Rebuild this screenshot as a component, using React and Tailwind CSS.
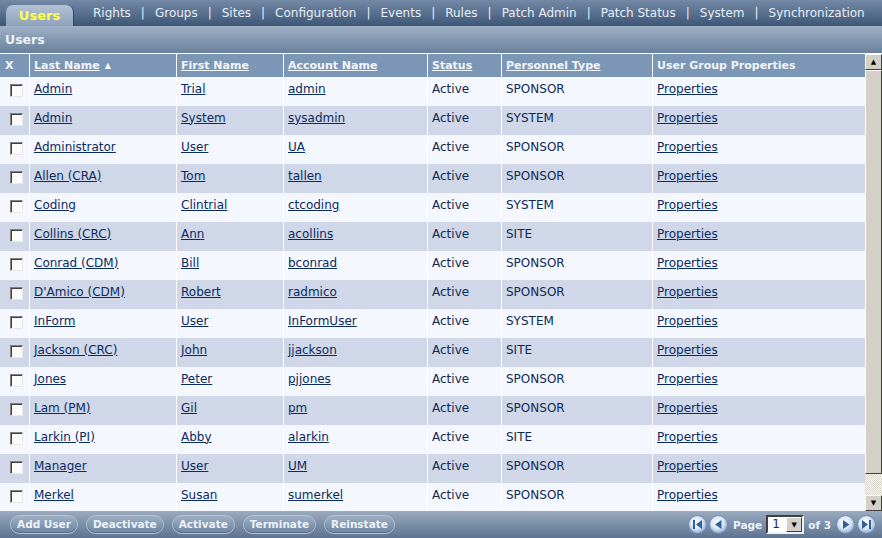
import React from 'react';

const NAV = ['Rights', 'Groups', 'Sites', 'Configuration', 'Events', 'Rules', 'Patch Admin', 'Patch Status', 'System', 'Synchronization'];

const USERS = [
  ['Admin', 'Trial', 'admin', 'SPONSOR'],
  ['Admin', 'System', 'sysadmin', 'SYSTEM'],
  ['Administrator', 'User', 'UA', 'SPONSOR'],
  ['Allen (CRA)', 'Tom', 'tallen', 'SPONSOR'],
  ['Coding', 'Clintrial', 'ctcoding', 'SYSTEM'],
  ['Collins (CRC)', 'Ann', 'acollins', 'SITE'],
  ['Conrad (CDM)', 'Bill', 'bconrad', 'SPONSOR'],
  ["D'Amico (CDM)", 'Robert', 'radmico', 'SPONSOR'],
  ['InForm', 'User', 'InFormUser', 'SYSTEM'],
  ['Jackson (CRC)', 'John', 'jjackson', 'SITE'],
  ['Jones', 'Peter', 'pjjones', 'SPONSOR'],
  ['Lam (PM)', 'Gil', 'pm', 'SPONSOR'],
  ['Larkin (PI)', 'Abby', 'alarkin', 'SITE'],
  ['Manager', 'User', 'UM', 'SPONSOR'],
  ['Merkel', 'Susan', 'sumerkel', 'SPONSOR'],
];

const ACTIONS = ['Add User', 'Deactivate', 'Activate', 'Terminate', 'Reinstate'];

const GRID = 'grid grid-cols-[29px_147px_107px_144px_74px_151px_1fr]';
const CELL = 'flex items-center pl-[4px] pb-[6px] border-l border-white whitespace-nowrap';
const HEAD = 'flex items-center pl-[4px] border-l border-white whitespace-nowrap';

function Checkbox() {
  return (
    <span className="block w-[13px] h-[13px] bg-[#fbfbfb] border border-t-[#808080] border-l-[#808080] border-b-[#e8e8e8] border-r-[#e8e8e8] shadow-[inset_1px_1px_0_#404040]" />
  );
}

function PageButton({ kind }) {
  return (
    <svg width="19" height="19" viewBox="0 0 19 19">
      <defs>
        <radialGradient id={'pg' + kind} cx="45%" cy="40%" r="60%">
          <stop offset="0" stopColor="#ffffff" />
          <stop offset="0.55" stopColor="#dce8f6" />
          <stop offset="1" stopColor="#8eaad0" />
        </radialGradient>
      </defs>
      <circle cx="9.5" cy="9.5" r="9" fill={'url(#pg' + kind + ')'} stroke="#6f8cb4" strokeWidth="1" />
      {kind === 'first' && (
        <g fill="#2f5f9e">
          <rect x="5" y="5" width="2" height="9" />
          <polygon points="14,5 14,14 8,9.5" />
        </g>
      )}
      {kind === 'prev' && <polygon points="12.5,5 12.5,14 6,9.5" fill="#2f5f9e" />}
      {kind === 'next' && <polygon points="7,5 7,14 13.5,9.5" fill="#2f5f9e" />}
      {kind === 'last' && (
        <g fill="#2f5f9e">
          <polygon points="5,5 5,14 11,9.5" />
          <rect x="12" y="5" width="2" height="9" />
        </g>
      )}
    </svg>
  );
}

export default function App() {
  return (
    <div className="w-[882px] h-[538px] overflow-hidden flex flex-col bg-white text-[12px] leading-[16px] text-[#0e2a52]" style={{ fontFamily: '"DejaVu Sans", Verdana, sans-serif' }}>
      {/* tab strip */}
      <div className="h-[26px] shrink-0 flex items-end bg-gradient-to-b from-[#7389a6] to-[#3f5777] pl-[6px]">
        <div className="w-[67px] h-[21px] shrink-0 rounded-t-[7px] bg-gradient-to-b from-[#b3c1d2] to-[#8ea2ba] flex items-center justify-center font-bold text-[13px] text-[#ffff55] shadow-[1px_0_0_#33486a]">
          Users
        </div>
        <div className="flex items-center h-[26px] ml-[20px] text-[12px] text-[#e8eef5] gap-[10px] whitespace-nowrap">
          {NAV.map((n, i) => (
            <React.Fragment key={n}>
              {i > 0 && <span>|</span>}
              <span>{n}</span>
            </React.Fragment>
          ))}
        </div>
      </div>

      {/* title */}
      <div className="h-[27px] shrink-0 flex items-center px-[5px] bg-gradient-to-b from-[#9eb0c4] to-[#6a819d] font-bold text-[12.5px] text-[#eef2f7]">
        Users
      </div>

      {/* table + scrollbar */}
      <div className="flex-1 min-h-0 flex border-t border-white bg-white">
        <div className="flex-1 overflow-hidden">
          <div className={GRID + ' h-[23px] bg-[#7b97b5] font-bold text-[11px] text-[#f2f5f9]'}>
            <div className="flex items-center pl-[5px]">X</div>
            <div className={HEAD}>
              <span className="underline">Last Name</span>
              <span className="ml-[5px] text-[8px]">▲</span>
            </div>
            <div className={HEAD}><span className="underline">First Name</span></div>
            <div className={HEAD}><span className="underline">Account Name</span></div>
            <div className={HEAD}><span className="underline">Status</span></div>
            <div className={HEAD}><span className="underline">Personnel Type</span></div>
            <div className={HEAD}>User Group Properties</div>
          </div>
          {USERS.map((u, i) => (
            <div key={i} className={GRID + ' h-[29px] ' + (i % 2 ? 'bg-[#cfd7e9]' : 'bg-[#f5f7ff]')}>
              <div className="flex items-center pl-[10px] pb-[3px]"><Checkbox /></div>
              <div className={CELL}><a className="underline text-[#0a2b5e]">{u[0]}</a></div>
              <div className={CELL}><a className="underline text-[#0a2b5e]">{u[1]}</a></div>
              <div className={CELL}><a className="underline text-[#0a2b5e]">{u[2]}</a></div>
              <div className={CELL}>Active</div>
              <div className={CELL}>{u[3]}</div>
              <div className={CELL}><a className="underline text-[#0a2b5e]">Properties</a></div>
            </div>
          ))}
        </div>

        {/* scrollbar */}
        <div className="w-[17px] shrink-0 flex flex-col bg-[repeating-conic-gradient(#d4d0c8_0_25%,#ffffff_0_50%)] bg-[length:2px_2px]">
          <div className="h-[16px] shrink-0 flex items-center justify-center bg-[#d4d0c8] border border-t-white border-l-white border-b-[#404040] border-r-[#404040] text-[7px] leading-none text-black">▲</div>
          <div className="h-[404px] shrink-0 bg-[#d4d0c8] border border-t-white border-l-white border-b-[#404040] border-r-[#404040]" />
          <div className="flex-1" />
          <div className="h-[16px] shrink-0 flex items-center justify-center bg-[#d4d0c8] border border-t-white border-l-white border-b-[#404040] border-r-[#404040] text-[7px] leading-none text-black">▼</div>
        </div>
      </div>

      {/* footer */}
      <div className="h-[27px] shrink-0 flex items-center bg-gradient-to-b from-[#9aabbf] to-[#5d7492] pl-[10px] pr-[6px]">
        <div className="flex gap-[8px]">
          {ACTIONS.map(a => (
            <button key={a} className="h-[19px] px-[6px] rounded-full border border-[#b4c2d2] bg-gradient-to-b from-[#9cafc4] to-[#6e85a1] text-[10.5px] font-bold text-[#eef2f7] leading-none whitespace-nowrap shadow-[inset_0_-1px_0_#5a6f8c]">
              {a}
            </button>
          ))}
        </div>
        <div className="ml-auto flex items-center gap-[2px] text-[10.5px] font-bold text-[#eef2f7]">
          <PageButton kind="first" />
          <PageButton kind="prev" />
          <span className="ml-[3px] mr-[2px]">Page</span>
          <div className="w-[38px] h-[19px] flex bg-white border-2 border-t-[#404040] border-l-[#404040] border-b-[#f0f0f0] border-r-[#f0f0f0]">
            <span className="flex-1 pl-[4px] font-normal text-[12px] leading-[15px] text-[#0e2a52]">1</span>
            <span className="w-[16px] flex items-center justify-center bg-[#d4d0c8] border border-t-white border-l-white border-b-[#404040] border-r-[#404040] text-[7px] text-black">▼</span>
          </div>
          <span className="ml-[2px] mr-[3px]">of 3</span>
          <PageButton kind="next" />
          <PageButton kind="last" />
        </div>
      </div>
    </div>
  );
}
